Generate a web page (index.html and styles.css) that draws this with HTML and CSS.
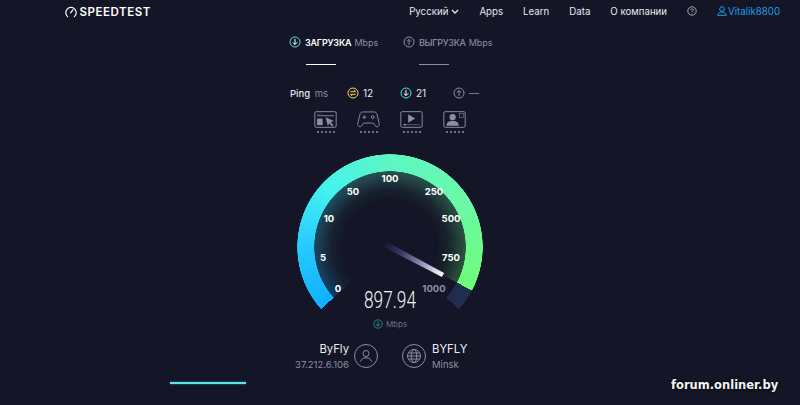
FILE: index.html
```html
<!DOCTYPE html>
<html lang="ru">
<head>
<meta charset="utf-8">
<title>Speedtest</title>
<link rel="stylesheet" href="styles.css">
</head>
<body>
<div class="page">
  <header class="topbar">
    <div class="logo">
      <svg class="logo-icon" viewBox="0 0 12 12"><path d="M2.6 10.6A5.2 5.2 0 1 1 9.4 10.6" /><path d="M5.6 6.8 7.9 3.8"/></svg>
      <span>SPEEDTEST</span>
    </div>
    <nav class="nav">
      <a class="lang">Русский <svg class="chev" viewBox="0 0 8 5"><path d="M1 1l3 3 3-3"/></svg></a>
      <a>Apps</a>
      <a>Learn</a>
      <a>Data</a>
      <a>О компании</a>
      <svg class="help" viewBox="0 0 10 10"><circle cx="5" cy="5" r="4.2"/><path d="M3.7 4a1.3 1.2 0 1 1 1.9 1.1c-.4.2-.6.4-.6.9"/><path d="M5 7.2v.5"/></svg>
      <a class="user"><svg class="user-icon" viewBox="0 0 10 10"><circle cx="5" cy="3" r="2.3"/><path d="M.7 9.3c.5-2.400 2-3.300 4.300-3.300s3.800.9 4.300 3.300z"/></svg>Vitalik8800</a>
    </nav>
  </header>

  <main class="main">
    <div class="tabs">
      <div class="tab active">
        <div class="tab-label">
          <svg class="ico ico-dl" viewBox="0 0 12 12"><circle cx="6" cy="6" r="5"/><path d="M6 3v5.500M3.700 6.300 6 8.600l2.300-2.300"/></svg>
          <b>ЗАГРУЗКА</b> <span>Mbps</span>
        </div>
        <i class="tab-line"></i>
      </div>
      <div class="tab">
        <div class="tab-label">
          <svg class="ico ico-ul" viewBox="0 0 12 12"><circle cx="6" cy="6" r="5"/><path d="M6 9V3.500M3.700 5.700 6 3.400l2.300 2.300"/></svg>
          <b>ВЫГРУЗКА</b> <span>Mbps</span>
        </div>
        <i class="tab-line"></i>
      </div>
    </div>

    <div class="stats">
      <div class="stat-ping"><b>Ping</b> <span>ms</span></div>
      <div class="stat">
        <svg class="ico ico-ping" viewBox="0 0 12 12"><circle cx="6" cy="6" r="5"/><path d="M3.300 4.700h5.200L6.800 3M8.700 7.300H3.500L5.200 9"/></svg>12
      </div>
      <div class="stat">
        <svg class="ico ico-dl" viewBox="0 0 12 12"><circle cx="6" cy="6" r="5"/><path d="M6 3v5.500M3.700 6.300 6 8.600l2.300-2.300"/></svg>21
      </div>
      <div class="stat stat-off">
        <svg class="ico ico-ul" viewBox="0 0 12 12"><circle cx="6" cy="6" r="5"/><path d="M6 9V3.500M3.700 5.700 6 3.400l2.300 2.300"/></svg>—
      </div>
    </div>

    <div class="media">
      <div class="media-item">
        <svg viewBox="0 0 24 18" class="media-icon"><rect x=".7" y=".7" width="22.600" height="16.600" rx="1.500"/><path d="M3 5h18"/><path class="thin" d="M3 3h.8M5 3h.8M7 3h.8"/><rect class="fill" x="3" y="8" width="6" height="7"/><path class="fill" d="M12 6.500l9 4-3.500 1.200 3 3.300-1.500 1.300-3-3.300-1.500 3z"/></svg>
        <div class="dots"><i></i><i></i><i></i><i></i><i></i></div>
      </div>
      <div class="media-item">
        <svg viewBox="0 0 24 18" class="media-icon"><path d="M6 1h12c1.500 0 2.500.8 3 2.500l2.300 9.500c.4 1.800-.8 3.700-2.300 3.700-1.300 0-2-.9-2.800-2.700-.4-.9-.9-1.200-1.700-1.200H7.500c-.8 0-1.300.3-1.700 1.200C5 15.800 4.300 16.700 3 16.700c-1.500 0-2.700-1.900-2.300-3.700L3 3.500C3.500 1.800 4.500 1 6 1z"/><path d="M5.500 6.500h4M7.500 4.500v4"/><circle cx="16.500" cy="6.500" r="1.500"/></svg>
        <div class="dots"><i></i><i></i><i></i><i></i><i></i></div>
      </div>
      <div class="media-item">
        <svg viewBox="0 0 24 18" class="media-icon"><rect x=".7" y=".7" width="22.600" height="16.600" rx="1.500"/><path class="fill" d="M8.500 3.500l7.500 4.500-7.500 4.500z"/><path class="thin" d="M3 14.500h18"/><circle class="fill" cx="5" cy="14.500" r="1"/></svg>
        <div class="dots"><i></i><i></i><i></i><i></i><i></i></div>
      </div>
      <div class="media-item">
        <svg viewBox="0 0 24 18" class="media-icon"><rect x=".7" y=".7" width="22.600" height="16.600" rx="1.500"/><circle class="fill" cx="10" cy="6.500" r="3.300"/><path class="fill" d="M3.500 15.500c0-3.500 2.500-5 6.500-5s6.500 1.500 6.500 5z"/><rect class="thin" x="17.500" y="2.500" width="4" height="4.500"/></svg>
        <div class="dots"><i></i><i></i><i></i><i></i><i></i></div>
      </div>
    </div>

    <div class="gauge">
      <div class="glow"></div>
      <div class="ring"></div>
      <svg class="needle" viewBox="0 0 186 186">
        <defs>
          <linearGradient id="needleFill" gradientUnits="userSpaceOnUse" x1="86" y1="89" x2="146" y2="121">
            <stop offset="0" stop-color="#3a4070" stop-opacity="0"/>
            <stop offset=".3" stop-color="#3f4570" stop-opacity=".8"/>
            <stop offset=".7" stop-color="#a0a4c4"/>
            <stop offset="1" stop-color="#fff"/>
          </linearGradient>
        </defs>
        <polygon fill="url(#needleFill)" points="87.400,86.600 84.600,91.800 144.900,123.100 147.100,119.100"/>
      </svg>
      <span class="tick t0">0</span>
      <span class="tick t5">5</span>
      <span class="tick t10">10</span>
      <span class="tick t50">50</span>
      <span class="tick t100">100</span>
      <span class="tick t250">250</span>
      <span class="tick t500">500</span>
      <span class="tick t750">750</span>
      <span class="tick t1000">1000</span>
      <span class="reading">897.94</span>
    </div>

    <div class="unit">
      <svg class="ico ico-dl-dim" viewBox="0 0 12 12"><circle cx="6" cy="6" r="5"/><path d="M6 3v5.500M3.700 6.300 6 8.600l2.300-2.300"/></svg>
      <span>Mbps</span>
    </div>

    <div class="servers">
      <div class="server server-left">
        <div class="server-name">ByFly</div>
        <div class="server-sub">37.212.6.106</div>
      </div>
      <svg class="round" viewBox="0 0 24 24"><circle cx="12" cy="12" r="11.500"/><circle cx="12" cy="9.500" r="3"/><path d="M6.500 17.500c.6-2.400 2.600-3.700 5.500-3.700s4.900 1.300 5.500 3.700"/></svg>
      <svg class="round round-globe" viewBox="0 0 24 24"><circle cx="12" cy="12" r="11.500"/><circle cx="12" cy="12" r="6.500"/><ellipse cx="12" cy="12" rx="2.800" ry="6.500"/><path d="M5.500 12h13M6.500 9h11M6.500 15h11"/></svg>
      <div class="server">
        <div class="server-name">BYFLY</div>
        <div class="server-sub">Minsk</div>
      </div>
    </div>
  </main>

  <footer class="foot">
    <i class="progress"></i>
    <span class="mark">forum.onliner.by</span>
  </footer>
</div>
</body>
</html>
```
FILE: styles.css
```css
* { box-sizing: border-box; }
html, body { margin: 0; padding: 0; background: #141526; }
.page {
  width: 800px; height: 405px; overflow: hidden;
  display: flex; flex-direction: column;
  background: #141526; color: #fff;
  font-family: Inter, "Open Sans", sans-serif;
}
a { color: inherit; text-decoration: none; }

.topbar {
  height: 23px; flex: none; display: flex; align-items: center;
  justify-content: space-between; padding: 0 20px 1px 65px;
}
.logo { display: flex; align-items: center; gap: 2.500px; margin-top: 1px; font-size: 11.500px; font-weight: 600; letter-spacing: .55px; color: #fff; }
.logo-icon { width: 12px; height: 12px; fill: none; stroke: #fff; stroke-width: 1.200; stroke-linecap: round; }
.nav { display: flex; align-items: center; font-size: 9.700px; color: #e6e7f0; gap: 20px; }
.lang { display: flex; align-items: center; gap: 3px; }
.chev { width: 8px; height: 5px; fill: none; stroke: #e6e7f0; stroke-width: 1.300; }
.help { width: 10px; height: 10px; fill: none; stroke: #c8c9d6; stroke-width: .8; }
.user { display: flex; align-items: center; gap: 1px; color: #1d9fe0; }
.user-icon { width: 10px; height: 10px; fill: none; stroke: #1d9fe0; stroke-width: 1; }

.main { flex: none; display: flex; flex-direction: column; align-items: center; padding-right: 20px; }

.tabs { display: flex; gap: 24px; height: 42px; margin-top: 11px; }
.tab { display: flex; flex-direction: column; align-items: flex-start; width: 90px; color: #8d8ea5; padding-left: 1px; }
.tab-label { display: flex; align-items: center; gap: 3px; font-size: 9px; white-space: nowrap; height: 16px; }
.tab-label b { font-weight: 500; color: #8d8ea5; letter-spacing: -.3px; }
.tab-label .ico { margin-right: 1px; }
.tab.active b { color: #fff; font-weight: 600; letter-spacing: -.2px; }
.tab-line { display: block; width: 30px; height: 1px; background: #8d8ea5; margin: 14px 0 0 16px; }
.tab.active .tab-line { background: #fff; margin-left: 17px; }

.ico { width: 12px; height: 12px; fill: none; stroke-width: 1; flex: none; }
.ico-dl { stroke: #49e6e0; }
.ico-dl path { stroke: #fff; }
.ico-ul { stroke: #8d8ea5; }
.ico-ping { stroke: #f0d65a; }
.ico-ping path { stroke: #f0d65a; }
.ico-dl-dim { stroke: #2a9a98; }

.stats { display: flex; align-items: center; height: 14px; margin: 10px 13px 0 0; width: 187px; font-size: 9.500px; color: #e6e7f0; }
.stat-ping { flex: 0 0 57px; white-space: nowrap; }
.stat-ping b { font-weight: 500; }
.stat-ping span { color: #8d8ea5; margin-left: 2px; }
.stat { flex: 0 0 53px; display: flex; align-items: center; gap: 4px; font-size: 10px; }
.stat-off { flex: 0 0 24px; color: #8d8ea5; }

.media { display: flex; width: 152px; justify-content: space-between; margin-top: 11px; }
.media-item { display: flex; flex-direction: column; align-items: center; gap: 3px; width: 23px; }
.media-icon { width: 23px; height: 17px; fill: none; stroke: #8d8ea5; stroke-width: 1; }
.media-icon .fill { fill: #8d8ea5; stroke: none; }
.media-icon .thin { stroke-width: .6; }
.dots { display: flex; gap: 2px; }
.dots i { display: block; width: 2px; height: 2px; background: #6f7088; }

.gauge { position: relative; width: 186px; height: 154px; margin-top: 21px; flex: none; }
.ring, .glow, .needle { position: absolute; left: 0; top: 0; width: 186px; height: 186px; }
.ring {
  background: conic-gradient(from -132deg,
    #10b0ff 0deg, #25c8ff 40deg, #45f2ee 85deg, #5cf6c6 130deg,
    #6bf9a8 190deg, #6dfb78 250deg, #1f2d50 250deg, #1f2d50 264deg, transparent 264deg);
  -webkit-mask: radial-gradient(circle at center, transparent 75.500px, #000 76px, #000 92.500px, transparent 93px);
  mask: radial-gradient(circle at center, transparent 75.500px, #000 76px, #000 92.500px, transparent 93px);
}
.glow {
  background: conic-gradient(from -132deg,
    #10b0ff 0deg, #45f2ee 85deg, #5cf6c6 130deg, #6dfb78 250deg, transparent 250deg);
  -webkit-mask: radial-gradient(circle at center, transparent 46px, rgba(0,0,0,.06) 58px, rgba(0,0,0,.28) 76px, transparent 76.500px);
  mask: radial-gradient(circle at center, transparent 46px, rgba(0,0,0,.06) 58px, rgba(0,0,0,.28) 76px, transparent 76.500px);
}
.tick { position: absolute; transform: translate(-50%, -50%); font-size: 9.500px; font-weight: 700; color: #fff; line-height: 1; }
.t0 { left: 41px; top: 135px; }
.t5 { left: 26px; top: 104px; }
.t10 { left: 32px; top: 65px; }
.t50 { left: 56px; top: 38px; }
.t100 { left: 93px; top: 25px; }
.t250 { left: 137px; top: 38px; }
.t500 { left: 154px; top: 65px; }
.t750 { left: 154px; top: 104px; }
.t1000 { left: 137px; top: 135px; color: #8d8ea5; }
.reading {
  position: absolute; left: 93px; top: 146px; transform: translate(-50%, -50%) scaleX(.72);
  font-family: Roboto, sans-serif; font-weight: 300; font-size: 24px; line-height: 1; color: #f4f4f8; white-space: nowrap;
}

.unit { display: flex; align-items: center; gap: 3px; margin-top: 10px; height: 12px; font-size: 8px; color: #6f7088; }
.ico.ico-dl-dim { width: 10px; height: 10px; }

.servers { display: flex; align-items: center; margin-top: 8px; width: 200px; }
.server { flex: 0 0 58px; font-size: 11.300px; line-height: 16px; padding-top: 3px; }
.server-left { text-align: right; flex: 0 0 59px; white-space: nowrap; direction: rtl; }
.server-name { color: #eeeef4; }
.server-sub { color: #8d8ea5; font-size: 9.500px; }
.round { width: 24px; height: 24px; fill: none; stroke: #8d8ea5; stroke-width: 1; margin-left: 5px; flex: none; }
.round-globe { margin-left: 24px; margin-right: 6px; }

.foot { flex: 1; position: relative; }
.progress { position: absolute; left: 170px; top: 9px; width: 76px; height: 2px; background: #62e3ea; box-shadow: 0 0 2px #2f9fa6; }
.mark { position: absolute; left: 671px; top: 5px; font-family: "DejaVu Sans", sans-serif; font-weight: 700; font-size: 11.500px; color: #f4f4f4; text-shadow: 0 0 3px #000; white-space: nowrap; }
```
